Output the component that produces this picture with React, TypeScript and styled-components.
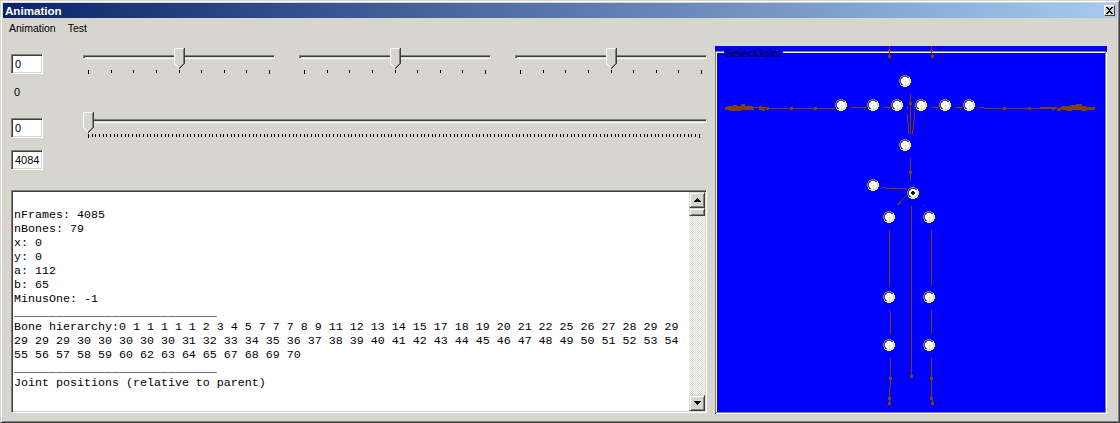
import React from "react";
import styled, {createGlobalStyle} from "styled-components";

const FACE = "#d6d5ce";
const UI_FONT = `"Liberation Sans", Arial, sans-serif`;
const BROWN = "#804000";

const GlobalStyle = createGlobalStyle`
  html, body {
    margin: 0;
    padding: 0;
    background: ${FACE};
  }
`;

const Window = styled.div`
  width: 1120px;
  height: 423px;
  box-sizing: border-box;
  overflow: hidden;
  background: ${FACE};
  border-top: 1px solid ${FACE};
  border-left: 1px solid ${FACE};
  border-right: 1px solid #404040;
  border-bottom: 1px solid #404040;
  box-shadow: inset 1px 1px 0 #fff, inset -1px -1px 0 #808080;
  padding: 2px;
  font-family: ${UI_FONT};
  display: flex;
  flex-direction: column;
`;

const TitleBar = styled.div`
  height: 15px;
  flex: none;
  display: flex;
  align-items: center;
  justify-content: space-between;
  padding: 0 2px;
  background: linear-gradient(to right, #0a246a, #a6caf0);
`;

const Title = styled.span`
  color: #fff;
  font-size: 11.6px;
  font-weight: bold;
`;

const CloseButton = styled.div`
  width: 11px;
  height: 11px;
  box-sizing: border-box;
  background: ${FACE};
  border: 1px solid;
  border-color: #fff #404040 #404040 #fff;
  display: flex;
  align-items: center;
  justify-content: center;
`;

const MenuBar = styled.div`
  height: 19px;
  flex: none;
  display: flex;
  align-items: center;
  gap: 12px;
  padding-left: 6px;
  font-size: 10.5px;
  color: #000;
`;

const Body = styled.div`
  flex: 1;
  display: flex;
  align-items: flex-start;
  padding: 9px 0 0 8px;
`;

const LeftColumn = styled.div`
  width: 696px;
  flex: none;
  display: flex;
  flex-direction: column;
  padding-top: 2px;
`;

const ControlRow = styled.div<{$height: number}>`
  height: ${p => p.$height}px;
  display: flex;
  align-items: flex-start;
`;

const EditBox = styled.div<{$top?: number}>`
  width: 32px;
  height: 20px;
  flex: none;
  box-sizing: border-box;
  margin-top: ${p => p.$top ?? 0}px;
  background: #fff;
  border: 1px solid;
  border-color: #808080 #fff #fff #808080;
  box-shadow: inset 1px 1px 0 #404040, inset -1px -1px 0 ${FACE};
  font-size: 11px;
  line-height: 18px;
  padding-left: 3px;
  color: #000;
`;

const StaticLabel = styled.span`
  font-size: 11px;
  padding-left: 3px;
  color: #000;
  line-height: 14px;
`;

const SliderGroup = styled.div`
  display: flex;
  gap: 24px;
  margin-left: 40px;
`;

const Slider = styled.div<{$width: number}>`
  position: relative;
  width: ${p => p.$width}px;
  height: 27px;
  flex: none;
`;

const Track = styled.div`
  margin-top: 7px;
  height: 4px;
  box-sizing: border-box;
  border: 1px solid;
  border-color: #808080 #fff #fff #808080;
  box-shadow: inset 1px 1px 0 #404040, inset -1px -1px 0 ${FACE};
`;

const Thumb = styled.svg`
  position: absolute;
  top: 0;
  display: block;
`;

const Ticks = styled.div`
  display: flex;
  justify-content: space-between;
  margin-top: 11px;
  padding: 0 5px;
`;

const Tick = styled.i<{$end: boolean}>`
  display: block;
  width: 1px;
  height: ${p => (p.$end ? 4 : 3)}px;
  background: #000;
`;

const OutputBox = styled.div`
  width: 696px;
  height: 223px;
  box-sizing: border-box;
  display: flex;
  background: #fff;
  border: 1px solid;
  border-color: #808080 #fff #fff #808080;
  box-shadow: inset 1px 1px 0 #404040, inset -1px -1px 0 ${FACE};
  padding: 1px;
`;

const OutputText = styled.pre`
  flex: 1;
  margin: 0;
  padding: 2px 0 0 1px;
  overflow: hidden;
  font-family: "Liberation Mono", "Courier New", monospace;
  font-size: 11.67px;
  line-height: 14px;
  color: #000;
`;

const ScrollBar = styled.div`
  width: 16px;
  flex: none;
  display: flex;
  flex-direction: column;
  background: repeating-conic-gradient(${FACE} 0 25%, #fff 0 50%) 0 0 / 2px 2px;
`;

const ScrollButton = styled.div`
  width: 16px;
  height: 16px;
  flex: none;
  box-sizing: border-box;
  background: ${FACE};
  border: 1px solid;
  border-color: ${FACE} #404040 #404040 ${FACE};
  box-shadow: inset 1px 1px 0 #fff, inset -1px -1px 0 #808080;
  display: flex;
  align-items: center;
  justify-content: center;
`;

const ScrollThumb = styled(ScrollButton)`
  height: 8px;
`;

const ScrollSpace = styled.div`
  flex: 1;
`;

const JointPanel = styled.div`
  position: relative;
  width: 392px;
  height: 368px;
  flex: none;
  box-sizing: border-box;
  margin: 0 0 0 8px;
  padding-top: 5px;
  background: #0000ff;
`;

const Frame = styled.div`
  height: 362px;
  width: 391px;
  box-sizing: border-box;
  border: 1px solid #808080;
  box-shadow: inset 1px 1px 0 #fff, 1px 1px 0 #fff;
`;

const Legend = styled.span`
  position: absolute;
  top: 0;
  left: 9px;
  width: 59px;
  box-sizing: border-box;
  padding-left: 1px;
  background: #0000ff;
  color: #000;
  font-size: 11.5px;
  line-height: 14px;
`;

const Skeleton = styled.svg`
  position: absolute;
  left: 0;
  top: 0;
  display: block;
`;

const JointRadio = styled.svg`
  position: absolute;
  display: block;
`;

const outputLines = [
  "",
  "nFrames: 4085",
  "nBones: 79",
  "x: 0",
  "y: 0",
  "a: 112",
  "b: 65",
  "MinusOne: -1",
  "_____________________________",
  "Bone hierarchy:0 1 1 1 1 1 2 3 4 5 7 7 7 8 9 11 12 13 14 15 17 18 19 20 21 22 25 26 27 28 29 29",
  "29 29 29 30 30 30 30 30 31 32 33 34 35 36 37 38 39 40 41 42 43 44 45 46 47 48 49 50 51 52 53 54",
  "55 56 57 58 59 60 62 63 64 65 67 68 69 70",
  "_____________________________",
  "Joint positions (relative to parent)",
];

const radioPixels = [
  "....gggg....",
  "..ggddddgg..",
  ".gddwwwwddW.",
  ".gdwwwwwwlW.",
  "gdwwwwwwwwlW",
  "gdwwwwwwwwlW",
  "gdwwwwwwwwlW",
  "gdwwwwwwwwlW",
  ".gdwwwwwwlW.",
  ".lddwwwwllW.",
  "..WWllllWW..",
  "....WWWW....",
];

const pixelColors: Record<string, string> = {
  g: "#808080",
  d: "#404040",
  w: "#ffffff",
  l: FACE,
  W: "#ffffff",
};

// centres of the joint radio buttons, in page coordinates
const joints = [
  [905, 81], [841, 105], [873, 105], [897, 105], [921, 105], [945, 105], [969, 105],
  [905, 145], [873, 185], [913, 193],
  [889, 217], [929, 217], [889, 297], [929, 297], [889, 345], [929, 345],
];

// x1 y1 x2 y2
const boneLines = [
  [889.5, 46, 889.5, 56], [931.5, 46, 931.5, 54], [932.5, 54, 932.5, 57],
  [767, 108.5, 835, 108.5], [984, 108.5, 1056, 108.5], [979, 107.5, 984, 107.5],
  [753, 107.5, 767, 107.5], [1040, 107.5, 1057, 107.5],
  [851, 107.5, 867, 107.5], [883, 107.5, 891, 107.5], [931, 107.5, 939, 107.5], [955, 107.5, 963, 107.5],
  [910.5, 94, 910.5, 134], [907.5, 106, 907.5, 109], [907.5, 114, 907.5, 123], [908.5, 123, 908.5, 134],
  [914.5, 106, 914.5, 109], [914.5, 112, 914.5, 121], [913.5, 121, 913.5, 130], [912.5, 130, 912.5, 134],
  [910.5, 158, 910.5, 181], [886, 188.5, 907, 188.5], [883, 187.5, 886, 187.5],
  [906.5, 195.5, 897.5, 205], [923, 205.5, 924, 205.5],
  [911.5, 206, 911.5, 376],
  [889.5, 230, 889.5, 286], [931.5, 230, 931.5, 286],
  [889.5, 310, 889.5, 312], [890.5, 312, 890.5, 334], [931.5, 310, 931.5, 334],
  [890.5, 358, 890.5, 387], [889.5, 387, 889.5, 403],
  [931.5, 358, 931.5, 398], [932.5, 398, 932.5, 403],
];

// x y w h
const boneBlocks = [
  [888, 55, 3, 3], [931, 55, 3, 3], [888, 50, 3, 1], [930, 50, 3, 1],
  [766, 107, 3, 3], [790, 107, 3, 3], [814, 107, 3, 3],
  [1003, 107, 3, 3], [1028, 107, 3, 3], [1052, 107, 3, 3],
  [909, 102, 3, 3], [909, 171, 3, 3], [910, 375, 3, 3],
  [889, 377, 3, 3], [930, 377, 3, 3], [888, 397, 3, 3], [930, 397, 3, 3], [888, 402, 3, 3], [931, 402, 3, 3],
  // left hand
  [725, 107, 29, 3], [727, 106, 26, 3], [729, 108, 7, 3], [733, 105, 4, 4], [736, 107, 6, 4], [741, 104, 4, 4],
  [759, 106, 3, 4], [762, 108, 3, 3],
  // right hand
  [1057, 108, 4, 3], [1060, 107, 35, 3], [1062, 106, 25, 3], [1066, 107, 6, 4], [1071, 105, 6, 4], [1076, 104, 6, 5],
  [1081, 106, 6, 5],
];

const THUMB_W = 11;
const THUMB_H = 21;

const SliderThumb: React.FC<{left: number}> = ({left}) => (
  <Thumb width={THUMB_W} height={THUMB_H} viewBox="0 0 11 21" shapeRendering="crispEdges" style={{left}}>
    <path d="M0 0H11V15L5.5 21L0 15Z" fill={FACE}/>
    <path d="M0 0H9V1H1V15H0Z" fill="#fff"/>
    <path d="M0 15H1V16H2V17H3V18H4V19H5V20H4V19H3V18H2V17H1V16H0Z" fill="#fff"/>
    <path d="M9 1H10V15H9Z" fill="#808080"/>
    <path d="M10 0H11V15H10Z" fill="#404040"/>
    <path d="M9 15H10V16H9V17H8V18H7V19H6V20H5V19H6V18H7V17H8V16H9Z" fill="#808080"/>
    <path d="M10 15H11V16H10V17H9V18H8V19H7V20H6V21H5V20H6V19H7V18H8V17H9V16H10Z" fill="#404040"/>
  </Thumb>
);

const TrackBar: React.FC<{width: number; thumb: number; ticks: number}> = ({width, thumb, ticks}) => (
  <Slider $width={width}>
    <Track/>
    <SliderThumb left={thumb}/>
    <Ticks>
      {Array.from({length: ticks}, (_, i) => (
        <Tick key={i} $end={i === 0 || i === ticks - 1}/>
      ))}
    </Ticks>
  </Slider>
);

const Radio: React.FC<{x: number; y: number; checked: boolean}> = ({x, y, checked}) => (
  <JointRadio
    width={12}
    height={12}
    viewBox="0 0 12 12"
    shapeRendering="crispEdges"
    style={{left: x - 6 - 715, top: y - 6 - 46}}
  >
    {radioPixels.map((row, r) =>
      row.split("").map((c, col) =>
        c === "." ? null : <rect key={`${r}-${col}`} x={col} y={r} width={1} height={1} fill={pixelColors[c]}/>
      )
    )}
    {checked && <path d="M5 4H7V5H8V7H7V8H5V7H4V5H5Z" fill="#000"/>}
  </JointRadio>
);

const ArrowIcon: React.FC<{up: boolean}> = ({up}) => (
  <svg width={7} height={4} viewBox="0 0 7 4" shapeRendering="crispEdges">
    <path
      d={up ? "M3 0H4V1H5V2H6V3H7V4H0V3H1V2H2V1H3Z" : "M0 0H7V1H6V2H5V3H4V4H3V3H2V2H1V1H0Z"}
      fill="#000"
    />
  </svg>
);

export default function App() {
  return (
    <>
      <GlobalStyle/>
      <Window>
        <TitleBar>
          <Title>Animation</Title>
          <CloseButton>
            <svg width={7} height={7} viewBox="0 0 8 7" shapeRendering="crispEdges">
              <path d="M0 0H2V1H3V2H5V1H6V0H8V1H7V2H6V3H5V4H6V5H7V6H8V7H6V6H5V5H3V6H2V7H0V6H1V5H2V4H3V3H2V2H1V1H0Z" fill="#000"/>
            </svg>
          </CloseButton>
        </TitleBar>
        <MenuBar>
          <span>Animation</span>
          <span>Test</span>
        </MenuBar>
        <Body>
          <LeftColumn>
            <ControlRow $height={37}>
              <EditBox $top={6}>0</EditBox>
              <SliderGroup>
                <TrackBar width={192} thumb={91} ticks={9}/>
                <TrackBar width={192} thumb={91} ticks={9}/>
                <TrackBar width={192} thumb={91} ticks={9}/>
              </SliderGroup>
            </ControlRow>
            <ControlRow $height={27}>
              <StaticLabel>0</StaticLabel>
            </ControlRow>
            <ControlRow $height={38}>
              <EditBox $top={6}>0</EditBox>
              <SliderGroup>
                <TrackBar width={624} thumb={0} ticks={168}/>
              </SliderGroup>
            </ControlRow>
            <ControlRow $height={40}>
              <EditBox>4084</EditBox>
            </ControlRow>
            <OutputBox>
              <OutputText>{outputLines.join("\n")}</OutputText>
              <ScrollBar>
                <ScrollButton><ArrowIcon up/></ScrollButton>
                <ScrollThumb/>
                <ScrollSpace/>
                <ScrollButton><ArrowIcon up={false}/></ScrollButton>
              </ScrollBar>
            </OutputBox>
          </LeftColumn>
          <JointPanel>
            <Frame/>
            <Legend>SelectJoint</Legend>
            <Skeleton width={392} height={368} viewBox="715 46 392 368">
              <g stroke={BROWN} strokeWidth={1} shapeRendering="crispEdges">
                {boneLines.map(([x1, y1, x2, y2], i) => (
                  <line key={i} x1={x1} y1={y1} x2={x2} y2={y2}/>
                ))}
              </g>
              <g fill={BROWN} shapeRendering="crispEdges">
                {boneBlocks.map(([x, y, w, h], i) => (
                  <rect key={i} x={x} y={y} width={w} height={h}/>
                ))}
              </g>
            </Skeleton>
            {joints.map(([x, y]) => (
              <Radio key={`${x}-${y}`} x={x} y={y} checked={x === 913 && y === 193}/>
            ))}
          </JointPanel>
        </Body>
      </Window>
    </>
  );
}
